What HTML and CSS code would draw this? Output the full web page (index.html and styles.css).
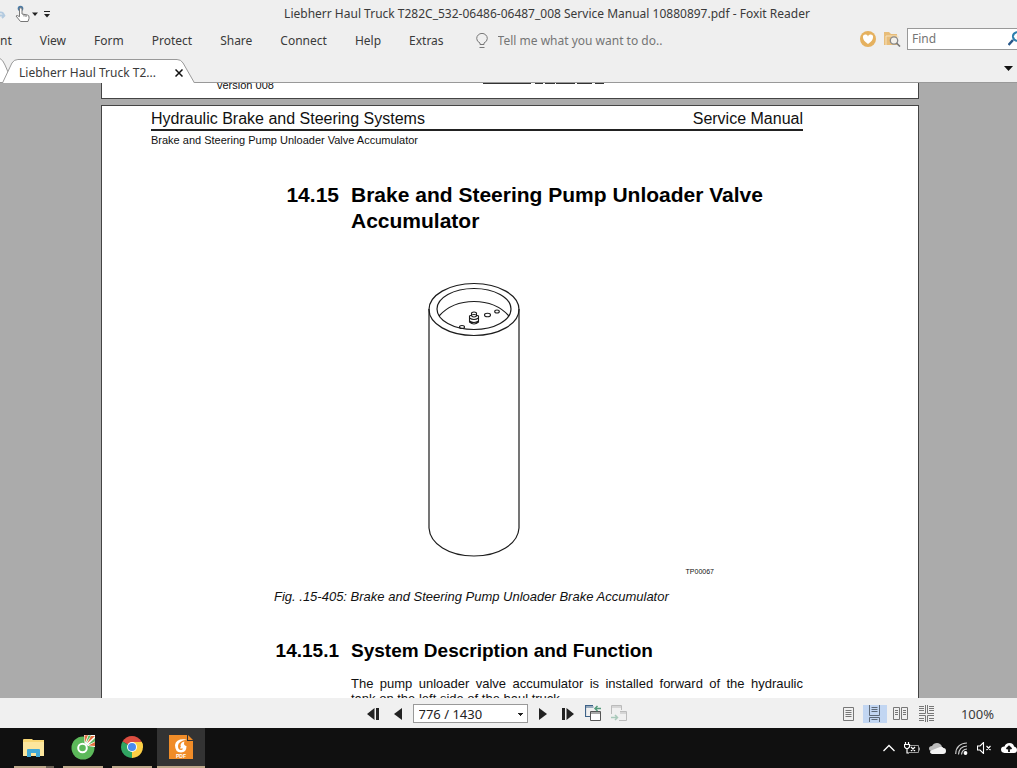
FILE: index.html
```html
<!DOCTYPE html>
<html lang="en">
<head>
<meta charset="utf-8">
<title>Liebherr Haul Truck T282C - Foxit Reader</title>
<link rel="stylesheet" href="styles.css">
</head>
<body>
<div class="app">
  <header class="titlebar">
    <div class="quick">
      <button class="icon-btn" aria-label="Redo"><svg width="8" height="16" viewBox="0 0 8 16"><path d="M0 6.500Q4 6 4 10.500M0 9.500h5M5 9L2 12" fill="none" stroke="#b4cbe0" stroke-width="1.800"/></svg></button>
      <button class="icon-btn hand" aria-label="Hand tool"><svg width="24" height="18" viewBox="0 0 24 18"><circle cx="6.500" cy="3.500" r="2.800" fill="#4e7ca5"/><path d="M5.500 11V4q0-1.200 1.200-1.200T8 4v5l5.500 1q1.500.3 1.500 2v1.500l-1 3H6.500L2 11q.8-1.300 3.500.7z" fill="#fff" stroke="#777"/><path d="M10 9.500v2M12 10v2" stroke="#777"/><path d="M18 7.500h6l-3 3.500z" fill="#222"/></svg></button>
      <button class="icon-btn" aria-label="Customize toolbar"><svg width="6" height="8" viewBox="0 0 6 8"><path d="M0 1.500h6" stroke="#222"/><path d="M0 4h6L3 7.500z" fill="#222"/></svg></button>
    </div>
    <h1 class="app-title">Liebherr Haul Truck T282C_532-06486-06487_008 Service Manual 10880897.pdf - Foxit Reader</h1>
  </header>

  <nav class="menu">
    <div class="menu-items">
      <button class="menu-btn">nt</button>
      <button class="menu-btn">View</button>
      <button class="menu-btn">Form</button>
      <button class="menu-btn">Protect</button>
      <button class="menu-btn">Share</button>
      <button class="menu-btn">Connect</button>
      <button class="menu-btn">Help</button>
      <button class="menu-btn">Extras</button>
    </div>
    <label class="tell">
      <svg width="12" height="16" viewBox="0 0 12 16" fill="none" stroke="#777"><path d="M4 11.500V10Q.7 8.500.7 5.500A5.200 5 0 0 1 11.300 5.500Q11.300 8.500 8 10v1.500zM3.500 14.500h5"/></svg>
      <input class="tell-input" type="text" aria-label="Tell me what you want to do" placeholder="Tell me what you want to do..">
    </label>
    <div class="menu-end">
      <button class="icon-btn" aria-label="Favorites"><svg width="16" height="16" viewBox="0 0 16 16"><circle cx="8" cy="8" r="8" fill="#e5b15f"/><path d="M8 13Q3 9.500 3 6.500A2.500 2.500 0 0 1 8 5.500 2.500 2.500 0 0 1 13 6.500Q13 9.500 8 13z" fill="#fff"/></svg></button>
      <button class="icon-btn" aria-label="Search folder"><svg width="17" height="16" viewBox="0 0 17 16"><path d="M0 14V1h5l2 2h6v11z" fill="#e8bd79"/><path d="M2 14V5h12v2" fill="none" stroke="#f6e2c0"/><circle cx="10" cy="9.500" r="3.700" fill="#f3f0ea" stroke="#888" stroke-width="1.300"/><path d="M12.500 12l3.500 3.500" stroke="#777" stroke-width="1.600"/></svg></button>
      <label class="find"><input class="find-input" type="text" aria-label="Find" placeholder="Find"><svg width="9" height="16" viewBox="0 0 9 16" fill="none" stroke="#2d7fae" stroke-width="2"><path d="M9 1Q4.500 2.500 5 6q.5 3 4 4"/><path d="M5 9l-4.500 5" stroke="#28578a" stroke-width="2.500"/></svg></label>
    </div>
  </nav>

  <div class="tabs">
    <svg class="tab-prev" width="8" height="24" viewBox="0 0 8 24"><path d="M0 .5Q3 2 5 7L8 13V24H0z" fill="#fff"/><path d="M0 .5Q3 2 5 7L8 14" fill="none" stroke="#999"/></svg>
    <div class="tab">
      <svg class="tab-shape" viewBox="0 0 194 24" preserveAspectRatio="none"><path d="M.5 24L10 4Q12 .5 16 .5H176Q180 .5 182 4L193.500 24" fill="#fff" stroke="#999"/></svg>
      <button class="tab-label">Liebherr Haul Truck T2...</button>
      <button class="icon-btn" aria-label="Close tab"><svg width="8" height="8" viewBox="0 0 8 8"><path d="M.5.500l7 7M7.500.500l-7 7" stroke="#111" stroke-width="1.500"/></svg></button>
    </div>
    <button class="icon-btn tab-list" aria-label="List tabs"><svg width="9" height="5" viewBox="0 0 9 5"><path d="M0 0h9L4.500 5z" fill="#111"/></svg></button>
  </div>

  <main class="viewer">
    <section class="sheet sheet-prev">
      <span>version 008</span>
      <svg class="prev-rule" width="122" height="14" viewBox="0 0 122 14"><path d="M0 .5h48M52 .5h8M62 .5h10M73 .5h19M94 .5h15M112 .5h9" stroke="#333"/></svg>
    </section>
    <article class="sheet">
      <div class="running"><span>Hydraulic Brake and Steering Systems</span><span>Service Manual</span></div>
      <p class="subhead">Brake and Steering Pump Unloader Valve Accumulator</p>
      <h2 class="section"><span class="num">14.15</span><span>Brake and Steering Pump Unloader Valve Accumulator</span></h2>
      <figure class="figure">
        <svg class="cylinder" width="92" height="276" viewBox="0 0 92 276" fill="none" stroke="#1c1c1c" stroke-width="1.200">
          <ellipse cx="46" cy="27.500" rx="45" ry="26"/>
          <ellipse cx="46" cy="27" rx="37" ry="20.500"/>
          <path d="M11 34Q24 19.500 46 19.500T81 34"/>
          <path d="M1 27V246C2 262 21 274 46 274S90 262 91 246V27"/>
          <g stroke-width="1.100"><ellipse cx="59.500" cy="33" rx="3" ry="1.800"/><ellipse cx="69" cy="29.500" rx="2.300" ry="1.500"/><ellipse cx="34" cy="45" rx="2.500" ry="1.500"/><path d="M41.500 34q4.500-3 9 0v6q-4.500 4-9 0zM41.500 36q4.500 3 9 0M41.500 39q4.500 3 9 0M43.500 34v-3q2.500-2 5 0v3q-2.500 2-5 0"/></g>
        </svg>
        <span class="plate">TP00067</span>
        <figcaption class="caption">Fig. .15-405: Brake and Steering Pump Unloader Brake Accumulator</figcaption>
      </figure>
      <h3 class="subsection"><span class="num">14.15.1</span><span>System Description and Function</span></h3>
      <p class="para">The pump unloader valve accumulator is installed forward of the hydraulic tank&nbsp;on the left side of the haul truck.</p>
    </article>
  </main>

  <footer class="status">
    <div class="pager">
      <div class="step">
        <button class="icon-btn" aria-label="First page"><svg width="13" height="12" viewBox="0 0 13 12" fill="#222"><path d="M7.500 0v12L0 6zM9 0h3v12H9z"/></svg></button>
        <button class="icon-btn" aria-label="Previous page"><svg width="8" height="12" viewBox="0 0 8 12" fill="#222"><path d="M8 0v12L0 6z"/></svg></button>
      </div>
      <select class="page-select" aria-label="Page"><option>776 / 1430</option></select>
      <div class="step">
        <button class="icon-btn" aria-label="Next page"><svg width="8" height="12" viewBox="0 0 8 12" fill="#222"><path d="M0 0v12l8-6z"/></svg></button>
        <button class="icon-btn" aria-label="Last page"><svg width="13" height="12" viewBox="0 0 13 12" fill="#222"><path d="M5.500 0v12L13 6zM1 0h3v12H1z"/></svg></button>
      </div>
      <div class="step views">
        <button class="icon-btn" aria-label="Previous view"><svg width="17" height="17" viewBox="0 0 17 17" fill="none"><path d="M5 11.500H.5V.5H8M.5 2h8" stroke="#3d6288" stroke-width="1.200"/><path d="M5.500 6.500h10v9h-10zM5.500 8h10" fill="#fff" stroke="#555"/><path d="M16 3.500h-5M12.500 1L10 3.500 12.500 6" stroke="#549b7c" stroke-width="1.500"/></svg></button>
        <button class="icon-btn" aria-label="Next view"><svg width="17" height="17" viewBox="0 0 17 17" fill="none"><path d="M.5 9V.5h10V5M.5 2h10M9 6.500h6.500v9H8M9 8h6" stroke="#bbb"/><path d="M0 12.500h6M4 10l2.500 2.500L4 15" stroke="#a9c9ba" stroke-width="1.500"/></svg></button>
      </div>
    </div>
    <div class="layouts">
      <button class="layout-btn" aria-label="Single page"><svg width="11" height="14" viewBox="0 0 11 14" fill="none" stroke="#777"><path d="M.5.500h10v13H.5zM2.500 3.500h6M2.500 5.500h6M2.500 7.500h6M2.500 9.500h6"/></svg></button>
      <button class="layout-btn chosen" aria-label="Continuous"><svg width="11" height="17" viewBox="0 0 11 17" fill="none" stroke="#5d6978"><path d="M.5 0v10.500h10V0M.5 17v-4.500h10V17M2.500 2.500h6M2.500 4.500h6M2.500 6.500h6M2.500 14.500h6"/></svg></button>
      <button class="layout-btn" aria-label="Facing"><svg width="15" height="13" viewBox="0 0 15 13" fill="none" stroke="#777"><path d="M.5.500h6v12h-6zM8.500.500h6v12h-6zM2 3.500h3M2 5.500h3M2 7.500h3M10 3.500h3M10 5.500h3M10 7.500h3"/></svg></button>
      <button class="layout-btn" aria-label="Continuous facing"><svg width="15" height="17" viewBox="0 0 15 17" fill="none" stroke="#777"><path d="M0 8.500h6.500V0M15 8.500H8.500V0M0 10.500h6.500V17M15 10.500H8.500V17M0 1.500h5M0 3.500h5M0 5.500h5M10 1.500h5M10 3.500h5M10 5.500h5M0 13.500h5M10 13.500h5M0 15.500h5M10 15.500h5"/></svg></button>
      <output class="zoom">100%</output>
    </div>
  </footer>

  <div class="taskbar">
    <div class="tasks">
      <button class="task stacked" aria-label="File Explorer"><svg width="24" height="24" viewBox="0 0 24 24"><path d="M1 5q0-1 1-1h8l1 1h11v16H1z" fill="#f8d775"/><path d="M1 7h21v14H1z" fill="#fce69d"/><path d="M5 22v-7q0-1 1-1h11q1 0 1 1v7h-4v-4H9v4z" fill="#42a9d6"/></svg></button>
      <button class="task" aria-label="Coc Coc"><svg width="26" height="26" viewBox="0 0 26 26"><circle cx="13" cy="14" r="11.500" fill="#5cb85a"/><path d="M14.500 9L14 1H25V13L18 12z" fill="#fff"/><path d="M15 8.500L14.500 1.500l3.500-.5zM17 9.500L21 2h4zM18.500 11.500L25 8v4z" fill="#e36f3e"/><path d="M16 9L18.500 1.500h2.500zM18 10.800L25 4v3.500z" fill="#5cb85a"/><circle cx="12.500" cy="14" r="4.300" fill="#5cb85a" stroke="#fff" stroke-width="2"/></svg></button>
      <button class="task" aria-label="Chrome"><svg width="22" height="22" viewBox="0 0 22 22"><path d="M11 11L1.500 5.500A11 11 0 0 1 20.500 5.500z" fill="#dc4d40"/><path d="M11 11L20.500 5.500A11 11 0 0 1 11 22z" fill="#fdcf45"/><path d="M11 11v11A11 11 0 0 1 1.500 5.500z" fill="#31a663"/><path d="M11 6h9.800Q22 8 22 11L11 22l4.500-8.500z" fill="#fdcf45"/><circle cx="11" cy="11" r="5" fill="#fff"/><circle cx="11" cy="11" r="4" fill="#4a8bf0"/></svg></button>
      <button class="task current" aria-label="Foxit Reader"><svg width="24" height="24" viewBox="0 0 24 24"><path d="M0 0h18l6 6v18H0z" fill="#f08c28"/><path d="M18 0h6v6h-6z" fill="#333"/><path d="M19 0l5 5h-5z" fill="#f08c28"/><path d="M18 4.500Q7 3 6 10q0 7.500 6 7.500 5.500 0 5.500-6.500h-5.500l-1 2.500h3Q13.500 15 12 15 9 15 9 11q0-5 9-6.500z" fill="#fff"/><path d="M11.500 11Q11.500 7 15.500 6.500 14 10 17 11z" fill="#fff"/><text class="pdf" x="12" y="23" text-anchor="middle">PDF</text></svg></button>
    </div>
    <div class="tray">
      <button class="icon-btn" aria-label="Show hidden icons"><svg width="12" height="8" viewBox="0 0 12 8" fill="none" stroke="#fff" stroke-width="1.300"><path d="M.5 7L6 1.500 11.500 7"/></svg></button>
      <button class="icon-btn" aria-label="Battery"><svg width="16" height="12" viewBox="0 0 16 12" fill="none" stroke="#fff"><path d="M5 3.500h9.500v7H5" stroke="#999"/><path d="M15.500 5.500v3" stroke="#999"/><path d="M1.500 0v2M4.500 0v2M.5 2.500h5V5L4 6.500H2L.5 5zM3 6.500V11h2M7 5l4 4M11 5L7 9" stroke-width="1.200"/></svg></button>
      <button class="icon-btn" aria-label="OneDrive"><svg width="17" height="11" viewBox="0 0 17 11"><path d="M3 8Q0 8 0 5.500T3 3Q4.500 0 8 0t5 3.500L6 9z" fill="#bbb"/><path d="M2 10.500Q0 9 2 7.500L11 4q2-.8 3.500 1Q17 5 17 8q0 3-3 3H3z" fill="#f3f3f3"/></svg></button>
      <button class="icon-btn" aria-label="Wi-Fi"><svg width="13" height="13" viewBox="0 0 13 13" fill="none" stroke="#ccc" stroke-width="1.200"><path d="M.7 12Q1 1.500 12 1M3.500 12.500Q4 4.500 12 4M6.500 12.500Q7 7.500 12 7"/><circle cx="10.500" cy="11" r="1.300" fill="#fff" stroke="#fff"/></svg></button>
      <button class="icon-btn" aria-label="Muted"><svg width="15" height="12" viewBox="0 0 15 12" fill="none" stroke="#fff" stroke-width="1.100"><path d="M.5 4H3L6.500.500v11L3 8H.5zM9.500 4l4 4M13.500 4l-4 4"/></svg></button>
      <button class="icon-btn" aria-label="Cloud upload"><svg width="16" height="12" viewBox="0 0 16 12"><path d="M3.500 11Q0 10.500 0 7.500T3.500 4.500Q4.500 1 8.500 1T13 4.500q3 .5 3 3.500t-3 3z" fill="#fff"/><path d="M8 10V6M5.500 7L8 4.500 10.500 7" fill="none" stroke="#111" stroke-width="1.800"/></svg></button>
    </div>
  </div>
</div>
</body>
</html>
```
FILE: styles.css
```css
* { box-sizing: border-box; }
body { margin: 0; background: #101010; }
button, input, select { font: inherit; color: inherit; margin: 0; padding: 0; border: 0; background: none; }
svg { display: block; flex: none; }

.app {
  height: 100vh;
  display: flex;
  flex-direction: column;
  overflow: hidden;
  font: 12px/16px "Noto Sans", sans-serif;
  color: #3a3a3a;
}
.icon-btn { flex: none; display: flex; }

.titlebar, .menu, .tabs { flex: none; display: flex; background: #efefef; }
.titlebar { height: 27px; align-items: center; position: relative; justify-content: center; }
.quick { position: absolute; left: 0; top: 5px; display: flex; align-items: center; gap: 6px; }
.app-title { margin: 0; padding-left: 77px; font: inherit; white-space: nowrap; }

.menu { height: 28px; align-items: center; }
.menu-items { display: flex; gap: 28px; }
.menu-btn { white-space: nowrap; }
.tell { display: flex; align-items: center; gap: 10px; padding-left: 32px; flex: 1; }
.tell-input { flex: 1; min-width: 0; }
.tell-input::placeholder, .find-input::placeholder { color: #757575; opacity: 1; }
.menu-end { display: flex; align-items: center; gap: 8px; padding-bottom: 4px; }
.find { display: flex; align-items: center; width: 110px; height: 22px; margin-left: -2px; padding-left: 4px; background: #fff; border: 1px solid #999; border-right: 0; }
.find-input { flex: 1; min-width: 0; }

.tabs { height: 28px; align-items: flex-end; border-bottom: 1px solid #999; }
.tab-prev { margin-right: -6px; }
.tab { position: relative; display: flex; align-items: center; gap: 19px; height: 24px; padding: 4px 11px 0 17px; width: 193px; margin-bottom: -1px; }
.tab-shape { position: absolute; left: 0; top: 0; width: 100%; height: 100%; }
.tab-label, .tab .icon-btn { position: relative; white-space: nowrap; }
.tab-list { margin: 0 4px 11px auto; }

.viewer { flex: 1; min-height: 0; overflow: hidden; display: flex; flex-direction: column; align-items: center; gap: 6px; padding-left: 3px; background: #ababab; }
.sheet { flex: none; width: 818px; max-width: 100%; background: #fff; border: 1px solid #444; padding: 3px 115px 0 49px; font-family: "Liberation Sans", Arial, sans-serif; color: #111; }
.sheet-prev { height: 36px; margin-top: -20px; padding: 14px 0 0 115px; display: flex; gap: 209px; font-size: 11px; line-height: 14px; }
.prev-rule { margin-top: 5px; }
.running { display: flex; justify-content: space-between; border-bottom: 2px solid #222; font-size: 16px; line-height: 20px; }
.subhead { margin: 2px 0 0; font-size: 11px; line-height: 14px; }
.section, .subsection { margin: 0; display: grid; grid-template-columns: 188px 1fr; column-gap: 12px; color: #000; }
.section { margin-top: 35px; font-size: 21px; line-height: 26px; }
.num { text-align: right; }
.figure { margin: 48px 0 0; display: flex; flex-direction: column; }
.cylinder { margin-left: 277px; }
.plate { align-self: flex-end; margin: 9px 89px 0 0; font-size: 7px; line-height: 10px; }
.caption { margin: 11px 0 0 123px; font-size: 13px; line-height: 18px; font-style: italic; }
.subsection { margin-top: 33px; font-size: 19px; line-height: 24px; }
.para { margin: 13px 0 0 200px; font-size: 13px; line-height: 15px; text-align: justify; }

.status { flex: none; height: 30px; display: grid; grid-template-columns: 1fr auto 1fr; align-items: center; padding-top: 1px; background: #f0f0f0; }
.pager { grid-column: 2; display: flex; align-items: center; gap: 11px; margin-right: 23px; }
.step { display: flex; align-items: center; gap: 14px; }
.views { gap: 9px; }
.page-select {
  appearance: none; width: 115px; height: 19px; padding-left: 5px; border: 1px solid #999; color: #222; font-size: 13px;
  background:
    linear-gradient(#222, #222) right 4px top 8px / 5px 1px no-repeat,
    linear-gradient(#222, #222) right 5px top 9px / 3px 1px no-repeat,
    linear-gradient(#222, #222) right 6px top 10px / 1px 1px no-repeat,
    #fff;
}
.layouts { display: flex; align-items: center; justify-content: flex-end; gap: 2px; padding-right: 23px; }
.layout-btn { width: 24px; height: 18px; display: flex; align-items: center; justify-content: center; }
.chosen { background: #c2d6f2; }
.zoom { padding-left: 20px; font-size: 13px; }

.taskbar { flex: none; height: 40px; display: flex; justify-content: space-between; background: #101010; }
.tasks { display: flex; gap: 9px; padding-left: 14px; }
.task { position: relative; width: 40px; display: flex; align-items: center; justify-content: center; border-bottom: 2px solid #bda98b; }
.stacked::after { content: ""; position: absolute; right: 0; bottom: -2px; width: 8px; height: 2px; background: #6b6154; }
.current { width: 48px; margin-left: -4px; background: #333; }
.pdf { font: bold 5px "Liberation Sans", sans-serif; fill: #fff; }
.tray { display: flex; align-items: center; gap: 9px; }
```
